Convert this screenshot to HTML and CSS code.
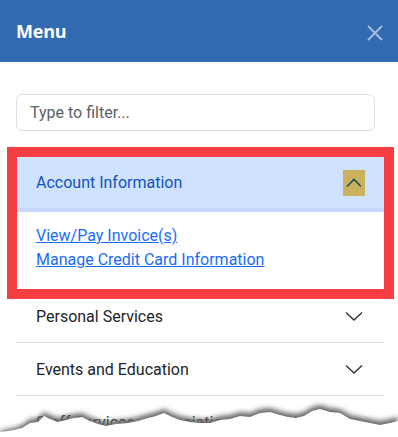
FILE: index.html
```html
<!DOCTYPE html>
<html>
<head>
<meta charset="utf-8">
<link rel="stylesheet" href="styles.css">
</head>
<body>
<div class="panel">
  <div class="topbar">
    <span class="title">Menu</span>
    <svg class="close" width="16" height="16" viewBox="0 0 16 16"><path d="M1 1 L15 15 M15 1 L1 15" stroke="#a7bedd" stroke-width="1.8" fill="none"/></svg>
  </div>
  <div class="content">
    <div class="filter">Type to filter...</div>
    <ul class="menu">
      <li class="item open">
        <div class="item-head">
          <span>Account Information</span>
          <span class="toggle"><svg width="16" height="10" viewBox="0 0 16 10"><path d="M1 8.5 L8 1.5 L15 8.5" stroke="#1f4f5c" stroke-width="1.6" fill="none"/></svg></span>
        </div>
        <div class="item-body">
          <a href="#">View/Pay Invoice(s)</a>
          <a href="#">Manage Credit Card Information</a>
        </div>
      </li>
      <li class="item">
        <div class="item-head plain">
          <span>Personal Services</span>
          <svg class="chev" width="18" height="10" viewBox="0 0 18 10"><path d="M1 1.5 L9 9 L17 1.5" stroke="#333" stroke-width="1.4" fill="none"/></svg>
        </div>
      </li>
      <li class="item">
        <div class="item-head plain">
          <span>Events and Education</span>
          <svg class="chev" width="18" height="10" viewBox="0 0 18 10"><path d="M1 1.5 L9 9 L17 1.5" stroke="#333" stroke-width="1.4" fill="none"/></svg>
        </div>
      </li>
      <li class="item last">
        <div class="item-head plain">
          <span>Staff Services - Association Staff Only</span>
        </div>
      </li>
    </ul>
  </div>
  <div class="highlight"></div>
  <svg class="torn" width="398" height="42" viewBox="0 0 398 42">
    <defs>
      <filter id="blur" x="-10%" y="-50%" width="120%" height="200%"><feGaussianBlur stdDeviation="2.5"/></filter>
    </defs>
    <path filter="url(#blur)" fill="#6a6a6a" d="M0 36 L8 34 L14 33 L22 30 L30 24 L38 23 L44 17 L50 20 L58 23 L66 21 L74 19 L82 18 L90 22 L98 25 L106 27 L116 25 L128 24 L138 22 L148 19 L156 17 L164 14 L172 18 L180 21 L190 23 L200 24 L210 24 L220 21 L230 20 L240 17 L250 18 L260 14 L270 13 L280 16 L288 18 L296 19 L304 17 L312 12 L320 10 L330 13 L340 14 L350 20 L360 22 L370 24 L380 26 L390 24 L398 22 L398 42 L0 42 Z"/>
    <path fill="#fff" d="M0 37 L8 36 L14 35 L22 33 L30 28 L38 27 L44 21 L50 24 L58 27 L66 25 L74 23 L82 22 L90 26 L98 29 L106 31 L116 29 L128 28 L138 26 L148 23 L156 21 L164 18 L172 22 L180 25 L190 27 L200 28 L210 28 L220 25 L230 24 L240 21 L250 22 L260 18 L270 17 L280 20 L288 22 L296 23 L304 21 L312 16 L320 14 L330 17 L340 18 L350 24 L360 26 L370 28 L380 30 L390 28 L398 26 L398 42 L0 42 Z"/>
  </svg>
</div>
</body>
</html>
```

FILE: styles.css
```css
html, body {
  margin: 0;
  padding: 0;
  background: #fff;
}
.panel {
  position: relative;
  width: 398px;
  height: 437px;
  overflow: hidden;
  font-family: Roboto, "Liberation Sans", sans-serif;
  font-size: 16px;
  color: #212529;
}
.topbar {
  height: 62px;
  background: #336bb2;
  display: flex;
  align-items: center;
  justify-content: space-between;
  padding: 0 15px 0 16px;
}
.title {
  font-family: "Open Sans", "Noto Sans", sans-serif;
  font-weight: 700;
  font-size: 18px;
  color: #fff;
  letter-spacing: -0.2px;
}
.close {
  margin-top: 4px;
}
.content {
  padding: 32px 14px 0 16px;
}
.filter {
  width: 359px;
  height: 37px;
  box-sizing: border-box;
  border: 1px solid #dcdfe3;
  border-radius: 6px;
  padding: 0 13px;
  display: flex;
  align-items: center;
  color: #5b6167;
}
.menu {
  list-style: none;
  margin: 26px 0 0 0;
  padding: 0;
}
.item {
  border-bottom: 1px solid #dee2e6;
}
.item-head {
  height: 52px;
  display: flex;
  align-items: center;
  justify-content: space-between;
  padding: 0 20px;
}
.open .item-head {
  background: #cfe2ff;
  color: #1551c0;
  border-bottom: 4px solid #c4d9fb;
  height: 51px;
}
.toggle {
  width: 22px;
  height: 26px;
  background: #c9b25b;
  display: flex;
  align-items: center;
  justify-content: center;
  margin-right: -1px;
}
.item-body {
  padding: 12px 20px 17px;
  display: flex;
  flex-direction: column;
  line-height: 24px;
}
.item-body a {
  color: #1a6cfb;
  text-decoration: underline;
  align-self: flex-start;
}
.plain {
  height: 52px;
}
.chev {
  margin-right: 1px;
}
.highlight {
  position: absolute;
  left: 7px;
  top: 147px;
  width: 387px;
  height: 152px;
  box-sizing: border-box;
  border: 10px solid #f73f43;
}
.torn {
  position: absolute;
  left: 0;
  top: 395px;
}
```
